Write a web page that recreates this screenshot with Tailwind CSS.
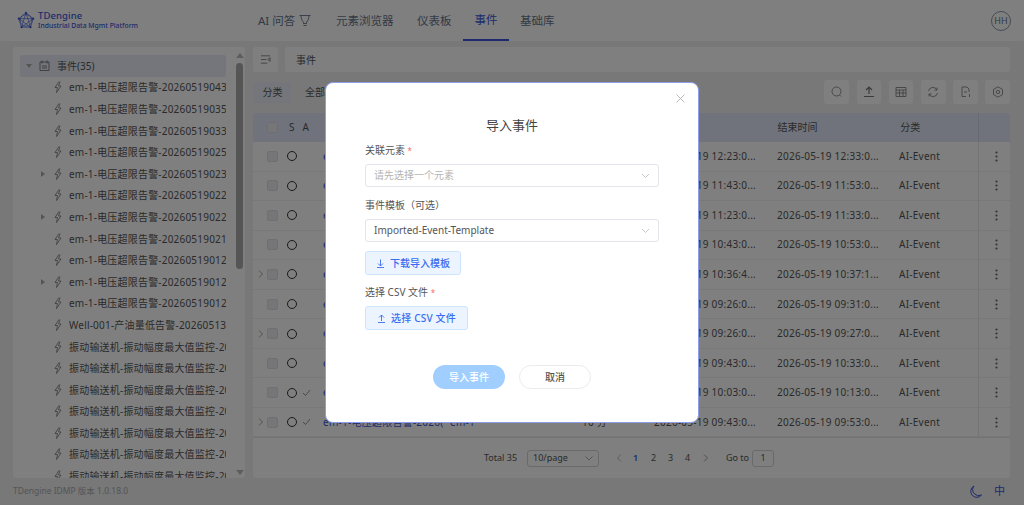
<!DOCTYPE html>
<html lang="zh-CN">
<head>
<meta charset="UTF-8">
<meta name="viewport" content="width=device-width, initial-scale=1.0">
<title>导入事件</title>
<script src="https://cdn.jsdelivr.net/npm/@tailwindcss/browser@4"></script>
</head>
<body class="relative w-[1024px] h-[505px] overflow-hidden bg-[#f0f0f1] text-[#555] text-[10px] font-['Noto_Sans','Noto_Sans_CJK_SC',sans-serif]">

<!-- header -->
<header class="h-[41px] flex items-center bg-white">
  <div class="w-[258px] pl-[17px] flex items-center gap-[3px] shrink-0">
    <svg class="w-[18px] h-[18px]" viewBox="0 0 20 20" fill="none" stroke="#3b57d8" stroke-width="0.7">
      <circle cx="10" cy="10.5" r="6.5"/>
      <path d="M10 2 18 8.5 15 18H5L2 8.5Z"/>
      <path d="M10 2 15 18 2 8.5H18L5 18Z"/>
      <g fill="#3b57d8" stroke="none"><circle cx="10" cy="2" r="1.2"/><circle cx="18" cy="8.5" r="1.2"/><circle cx="15" cy="18" r="1.2"/><circle cx="5" cy="18" r="1.2"/><circle cx="2" cy="8.5" r="1.2"/></g>
    </svg>
    <div class="leading-none text-[#3b57d8]">
      <div class="text-[9.500px] font-medium tracking-[0.1px]">TDengine</div>
      <div class="text-[6.800px] font-medium mt-[2px] whitespace-nowrap">Industrial Data Mgmt Platform</div>
    </div>
  </div>
  <nav class="flex h-full text-[11.500px] text-[#64748b]">
    <a class="flex items-center gap-[4px] w-[78px]">AI 问答
      <svg class="w-[12px] h-[13px]" viewBox="0 0 12 13" fill="none" stroke="#64748b" stroke-width="0.9"><path d="M.5 1.500h11M2 1.500c0 3 1 5.500 2.500 6.500v1.500h3V8c1.500-1 2.500-3.500 2.500-6.500M4.500 11.500h3"/></svg>
    </a>
    <a class="flex items-center w-[81px]">元素浏览器</a>
    <a class="flex items-center w-[46px]">仪表板</a>
    <a class="flex items-center w-[46px] justify-center text-[#3b57d8] border-b-2 border-[#3b57d8]">事件</a>
    <a class="flex items-center ml-[11px]">基础库</a>
  </nav>
  <div class="ml-auto mr-[13px] w-[20px] h-[20px] rounded-full border border-[#8a96ad] flex items-center justify-center text-[9px] text-[#64748b]">HH</div>
</header>

<div class="h-[437px] flex pt-[6px] pl-[13px] pr-[14px] gap-[8px]">
  <!-- tree -->
  <aside class="w-[232px] h-[431px] bg-white rounded-[3px] flex pl-[7px] pt-[8px] pr-[2px] overflow-hidden">
    <div id="tree" class="w-[206px] overflow-hidden"></div>
    <div class="ml-[10px] w-[7px] flex flex-col items-center">
      <div class="w-0 h-0 border-x-[4px] border-x-transparent border-b-[5px] border-b-[#bbb] mt-[-2px]"></div>
      <div class="w-[7px] h-[206px] bg-[#aaa] rounded-full mt-[5px]"></div>
      <div class="mt-auto mb-[3px] w-0 h-0 border-x-[4px] border-x-transparent border-t-[5px] border-t-[#bbb]"></div>
    </div>
  </aside>

  <!-- right side -->
  <section class="w-[757px]">
    <div class="flex gap-[7px] h-[25px]">
      <button class="w-[25px] bg-white rounded-[3px] flex items-center justify-center">
        <svg class="w-[11px] h-[11px]" viewBox="0 0 12 12" fill="none" stroke="#777" stroke-width="0.9"><path d="M1 2h10M1 10h7M1 6h6M11 4 8.5 6 11 8Z"/></svg>
      </button>
      <div class="flex-1 bg-white rounded-[3px] flex items-center pl-[11px] pt-[1px]">事件</div>
    </div>
    <div class="flex items-center h-[24px] mt-[8px]">
      <div class="w-[38px] h-[21px] bg-[#e8edf8] rounded-[3px] flex items-center justify-center pl-[1px]">分类</div>
      <div class="ml-[14px]">全部</div>
      <div id="tools" class="ml-auto flex gap-[7.6px]"></div>
    </div>
    <div class="mt-[9px] bg-white rounded-[3px] h-[365px] flex flex-col">
      <div class="h-[29px] shrink-0 bg-[#e0e6f7] rounded-t-[3px] flex items-center">
        <span class="ml-[14px] w-[11px] h-[11px] bg-[#ececf0] border border-[#dcdfe6] rounded-[2px]"></span>
        <span class="ml-[11px]">S</span><span class="ml-[8px]">A</span>
        <span class="ml-[346px] w-[123px]">开始时间</span>
        <span class="w-[123px]">结束时间</span>
        <span class="w-[78px]">分类</span>
        <span class="h-full w-[32px] border-l border-[#cfd5e6]"></span>
      </div>
      <div id="rows"></div>
      <div class="flex-1 min-h-0 border-t border-[#e6e6e6] flex items-center text-[9px]">
        <span class="ml-[231px] w-[32px] whitespace-nowrap">Total 35</span>
        <span class="ml-[11px] w-[72px] h-[17px] border border-[#d4d4d4] rounded-[3px] flex items-center px-[5px]">10/page
          <svg class="ml-auto w-[8px] h-[8px]" viewBox="0 0 8 8" fill="none" stroke="#999" stroke-width="0.8"><path d="M.5 2.5 4 6l3.500-3.500"/></svg>
        </span>
        <svg class="ml-[17px] w-[7px] h-[8px]" viewBox="0 0 7 8" fill="none" stroke="#aaa" stroke-width="0.8"><path d="M5 .5 1.500 4 5 7.500"/></svg>
        <b class="ml-[10px] w-[6px] text-[#3b57d8] font-semibold">1</b><span class="ml-[12px] w-[6px]">2</span><span class="ml-[11px] w-[6px]">3</span><span class="ml-[11px] w-[6px]">4</span>
        <svg class="ml-[11px] w-[7px] h-[8px]" viewBox="0 0 7 8" fill="none" stroke="#888" stroke-width="0.8"><path d="M2 .5 5.500 4 2 7.500"/></svg>
        <span class="ml-[17px] w-[21px] whitespace-nowrap">Go to</span>
        <span class="ml-[5px] w-[22px] h-[17px] border border-[#d4d4d4] rounded-[3px] flex items-center justify-center">1</span>
      </div>
    </div>
  </section>
</div>

<footer class="h-[27px] flex items-center pl-[13px] text-[#aaa] text-[8.500px]">
  <span>TDengine IDMP 版本 1.0.18.0</span>
  <svg class="ml-auto w-[13px] h-[13px]" viewBox="0 0 13 13" fill="none" stroke="#3b57d8" stroke-width="1"><path d="M5 1a6 6 0 0 0 7.500 9A6 6 0 1 1 5 1Z"/></svg>
  <span class="ml-[12px] mr-[19px] text-[#3b57d8] text-[11px]">中</span>
</footer>

<!-- overlay -->
<div class="absolute inset-0 bg-black/50"></div>

<!-- import dialog -->
<div class="absolute left-[325px] top-[82px] w-[374px] h-[341px] bg-white rounded-[8px] border border-[#8c9ce8] px-[39px] text-[#555]">
  <svg class="absolute right-[13px] top-[11px] w-[9px] h-[9px]" viewBox="0 0 9 9" stroke="#aaa" stroke-width="0.8"><path d="M.5.500l8 8M8.500.500l-8 8"/></svg>
  <h2 class="mt-[33px] text-center text-[13px] leading-[18px] text-[#444]">导入事件</h2>
  <label class="block mt-[8px] leading-[16px]">关联元素 <span class="text-[#f56c6c] text-[8px]">*</span></label>
  <div class="mt-[5px] h-[23px] border border-[#e4e4ea] rounded-[3px] flex items-center px-[8px] text-[#b3b3b3]">请先选择一个元素
    <svg class="ml-auto w-[9px] h-[9px]" viewBox="0 0 9 9" fill="none" stroke="#bbb" stroke-width="0.8"><path d="M1 3l3.500 3.500L8 3"/></svg>
  </div>
  <label class="block mt-[10px] leading-[16px]">事件模板（可选）</label>
  <div class="mt-[6px] h-[23px] border border-[#e4e4ea] rounded-[3px] flex items-center px-[8px]">Imported-Event-Template
    <svg class="ml-auto w-[9px] h-[9px]" viewBox="0 0 9 9" fill="none" stroke="#bbb" stroke-width="0.8"><path d="M1 3l3.500 3.500L8 3"/></svg>
  </div>
  <button class="mt-[9px] h-[24px] w-[96px] flex items-center justify-center gap-[5px] bg-[#ecf5ff] border border-[#cde4ff] rounded-[3px] text-[#3a6cf0] font-medium">
    <svg class="w-[9px] h-[9px]" viewBox="0 0 9 9" fill="none" stroke="#3a6cf0" stroke-width="0.9"><path d="M4.500.500v6M2 4.500l2.500 2.500L7 4.500M1 8.500h7"/></svg>下载导入模板
  </button>
  <label class="block mt-[9px] leading-[16px]">选择 CSV 文件 <span class="text-[#f56c6c] text-[8px]">*</span></label>
  <button class="mt-[5px] h-[24px] w-[103px] flex items-center justify-center gap-[5px] bg-[#ecf5ff] border border-[#cde4ff] rounded-[3px] text-[#3a6cf0] font-medium tracking-[0.2px]">
    <svg class="w-[9px] h-[9px]" viewBox="0 0 9 9" fill="none" stroke="#3a6cf0" stroke-width="0.9"><path d="M4.500 7V1M2 3.500 4.500 1 7 3.500M1 8.500h7"/></svg>选择 CSV 文件
  </button>
  <div class="mt-[35px] flex justify-center gap-[14px]">
    <button class="w-[72px] h-[24px] rounded-full bg-[#a0cfff] text-white font-medium">导入事件</button>
    <button class="w-[72px] h-[24px] rounded-full border border-[#ececec] font-medium">取消</button>
  </div>
</div>

<script>
  // tree rows
  const treeItems = [
    ['em-1-电压超限告警-20260519043', 0], ['em-1-电压超限告警-20260519035', 0],
    ['em-1-电压超限告警-20260519033', 0], ['em-1-电压超限告警-20260519025', 0],
    ['em-1-电压超限告警-20260519023', 1], ['em-1-电压超限告警-20260519022', 0],
    ['em-1-电压超限告警-20260519022', 1], ['em-1-电压超限告警-20260519021', 0],
    ['em-1-电压超限告警-20260519012', 0], ['em-1-电压超限告警-20260519012', 1],
    ['em-1-电压超限告警-20260519012', 0], ['Well-001-产油量低告警-20260513', 0]
  ];
  for (let i = 0; i < 7; i++) treeItems.push(['振动输送机-振动幅度最大值监控-2026', 0]);

  const bolt = '<svg class="w-[8px] h-[12px] shrink-0" viewBox="0 0 8 12" fill="none" stroke="#777" stroke-width="0.8"><path d="M5 .5 1 6.500h2.500L2.500 11.500 7 5H4.500L6 .5"/></svg>';
  let treeHtml = '<div class="h-[21.600px] bg-[#e8edf8] rounded-[2px] flex items-center whitespace-nowrap"><span class="ml-[6px] w-0 h-0 border-x-[3px] border-x-transparent border-t-[4px] border-t-[#aaa]"></span>'
    + '<svg class="ml-[7px] w-[11px] h-[11px]" viewBox="0 0 11 11" fill="none" stroke="#666" stroke-width="0.8"><path d="M1 2h9v8.500H1ZM3 .5v3M8 .5v3M3 6h5M3 8h5"/></svg>'
    + '<span class="ml-[7px] pt-[1px]">事件(35)</span></div>';
  for (const [name, arrow] of treeItems) {
    treeHtml += '<div class="h-[21.600px] flex items-center whitespace-nowrap pl-[21px]">'
      + '<span class="w-0 h-0 border-y-[3px] border-y-transparent border-l-[4px] ' + (arrow ? 'border-l-[#aaa]' : 'border-l-transparent') + '"></span>'
      + '<span class="ml-[8.500px]">' + bolt + '</span>'
      + '<span class="ml-[7.500px] pt-[1px] tracking-[0.2px]">' + name + '</span></div>';
  }
  document.getElementById('tree').innerHTML = treeHtml;

  // toolbar buttons
  const toolIcons = [
    '<circle cx="5.500" cy="5.500" r="4.500"/><path d="M8.500 9 10 10.500"/>',
    '<path d="M6 1v7M3 4l3-3 3 3M1 10.500h10" stroke-width="1.200"/>',
    '<path d="M1 1.500h10v9H1ZM1 4h10M1 7h10M4.500 4v6.500M8 4v6.500"/>',
    '<path d="M1.500 5A4.500 4.500 0 0 1 10 4M10.500 7A4.500 4.500 0 0 1 2 8M10 1.500V4H7.500M2 10.500V8h2.500"/>',
    '<path d="M2 10.500V1h5l2 2v3M2 10.500h4M4 6h3M9.500 8v3"/>',
    '<path d="M6 .8 10.500 3.400v5.200L6 11.200 1.500 8.600V3.400Z"/><circle cx="6" cy="6" r="1.700"/>'
  ];
  document.getElementById('tools').innerHTML = toolIcons.map(p =>
    '<span class="w-[24.600px] h-[24px] bg-white rounded-[3px] flex items-center justify-center"><svg class="w-[12px] h-[12px]" viewBox="0 0 12 12" fill="none" stroke="#777" stroke-width="0.8">' + p + '</svg></span>'
  ).join('');

  // table rows
  const rows = [
    ['12:23:0...', '2026-05-19 12:33:0...', 0, 0], ['11:43:0...', '2026-05-19 11:53:0...', 0, 0],
    ['11:23:0...', '2026-05-19 11:33:0...', 0, 0], ['10:43:0...', '2026-05-19 10:53:0...', 0, 0],
    ['10:36:4...', '2026-05-19 10:37:1...', 1, 0], ['09:26:0...', '2026-05-19 09:31:0...', 0, 0],
    ['09:26:0...', '2026-05-19 09:27:0...', 1, 0], ['09:43:0...', '2026-05-19 10:33:0...', 0, 0],
    ['10:03:0...', '2026-05-19 10:13:0...', 0, 1], ['09:43:0...', '2026-05-19 09:53:0...', 1, 1]
  ];
  document.getElementById('rows').innerHTML = rows.map(([start, end, expand, ack]) =>
    '<div class="h-[29.550px] flex items-center border-b border-[#f0f0f0] whitespace-nowrap tracking-[0.25px]">'
    + '<span class="w-[14px] flex justify-center">' + (expand ? '<svg class="ml-[2px] w-[6px] h-[8px]" viewBox="0 0 6 8" fill="none" stroke="#888" stroke-width="0.8"><path d="M1 .5 4.500 4 1 7.500"/></svg>' : '') + '</span>'
    + '<span class="w-[11px] h-[11px] bg-[#ececf0] border border-[#dcdfe6] rounded-[2px]"></span>'
    + '<span class="ml-[9px] w-[10px] h-[10px] rounded-full border border-[#333]"></span>'
    + '<span class="ml-[5px] w-[10px]">' + (ack ? '<svg class="w-[9px] h-[8px]" viewBox="0 0 9 8" fill="none" stroke="#777" stroke-width="0.8"><path d="M1 4l2.500 2.500L8 1"/></svg>' : '') + '</span>'
    + '<span class="ml-[11px] w-[127px] overflow-hidden text-[#3b57d8]">em-1-电压超限告警-2026(</span>'
    + '<span class="w-[132px] text-[#3b57d8]">em-1</span>'
    + '<span class="w-[72px]">10 分</span>'
    + '<span class="w-[123px]">2026-05-19 ' + start + '</span>'
    + '<span class="w-[122px]">' + end + '</span>'
    + '<span class="w-[79px]">AI-Event</span>'
    + '<span class="h-full w-[32px] pl-[4px] border-l border-[#e8e8e8] flex justify-center items-center"><svg class="w-[3px] h-[11px]" viewBox="0 0 3 11" fill="#666"><circle cx="1.500" cy="1.500" r="1.100"/><circle cx="1.500" cy="5.500" r="1.100"/><circle cx="1.500" cy="9.500" r="1.100"/></svg></span>'
    + '</div>'
  ).join('');
</script>
</body>
</html>
